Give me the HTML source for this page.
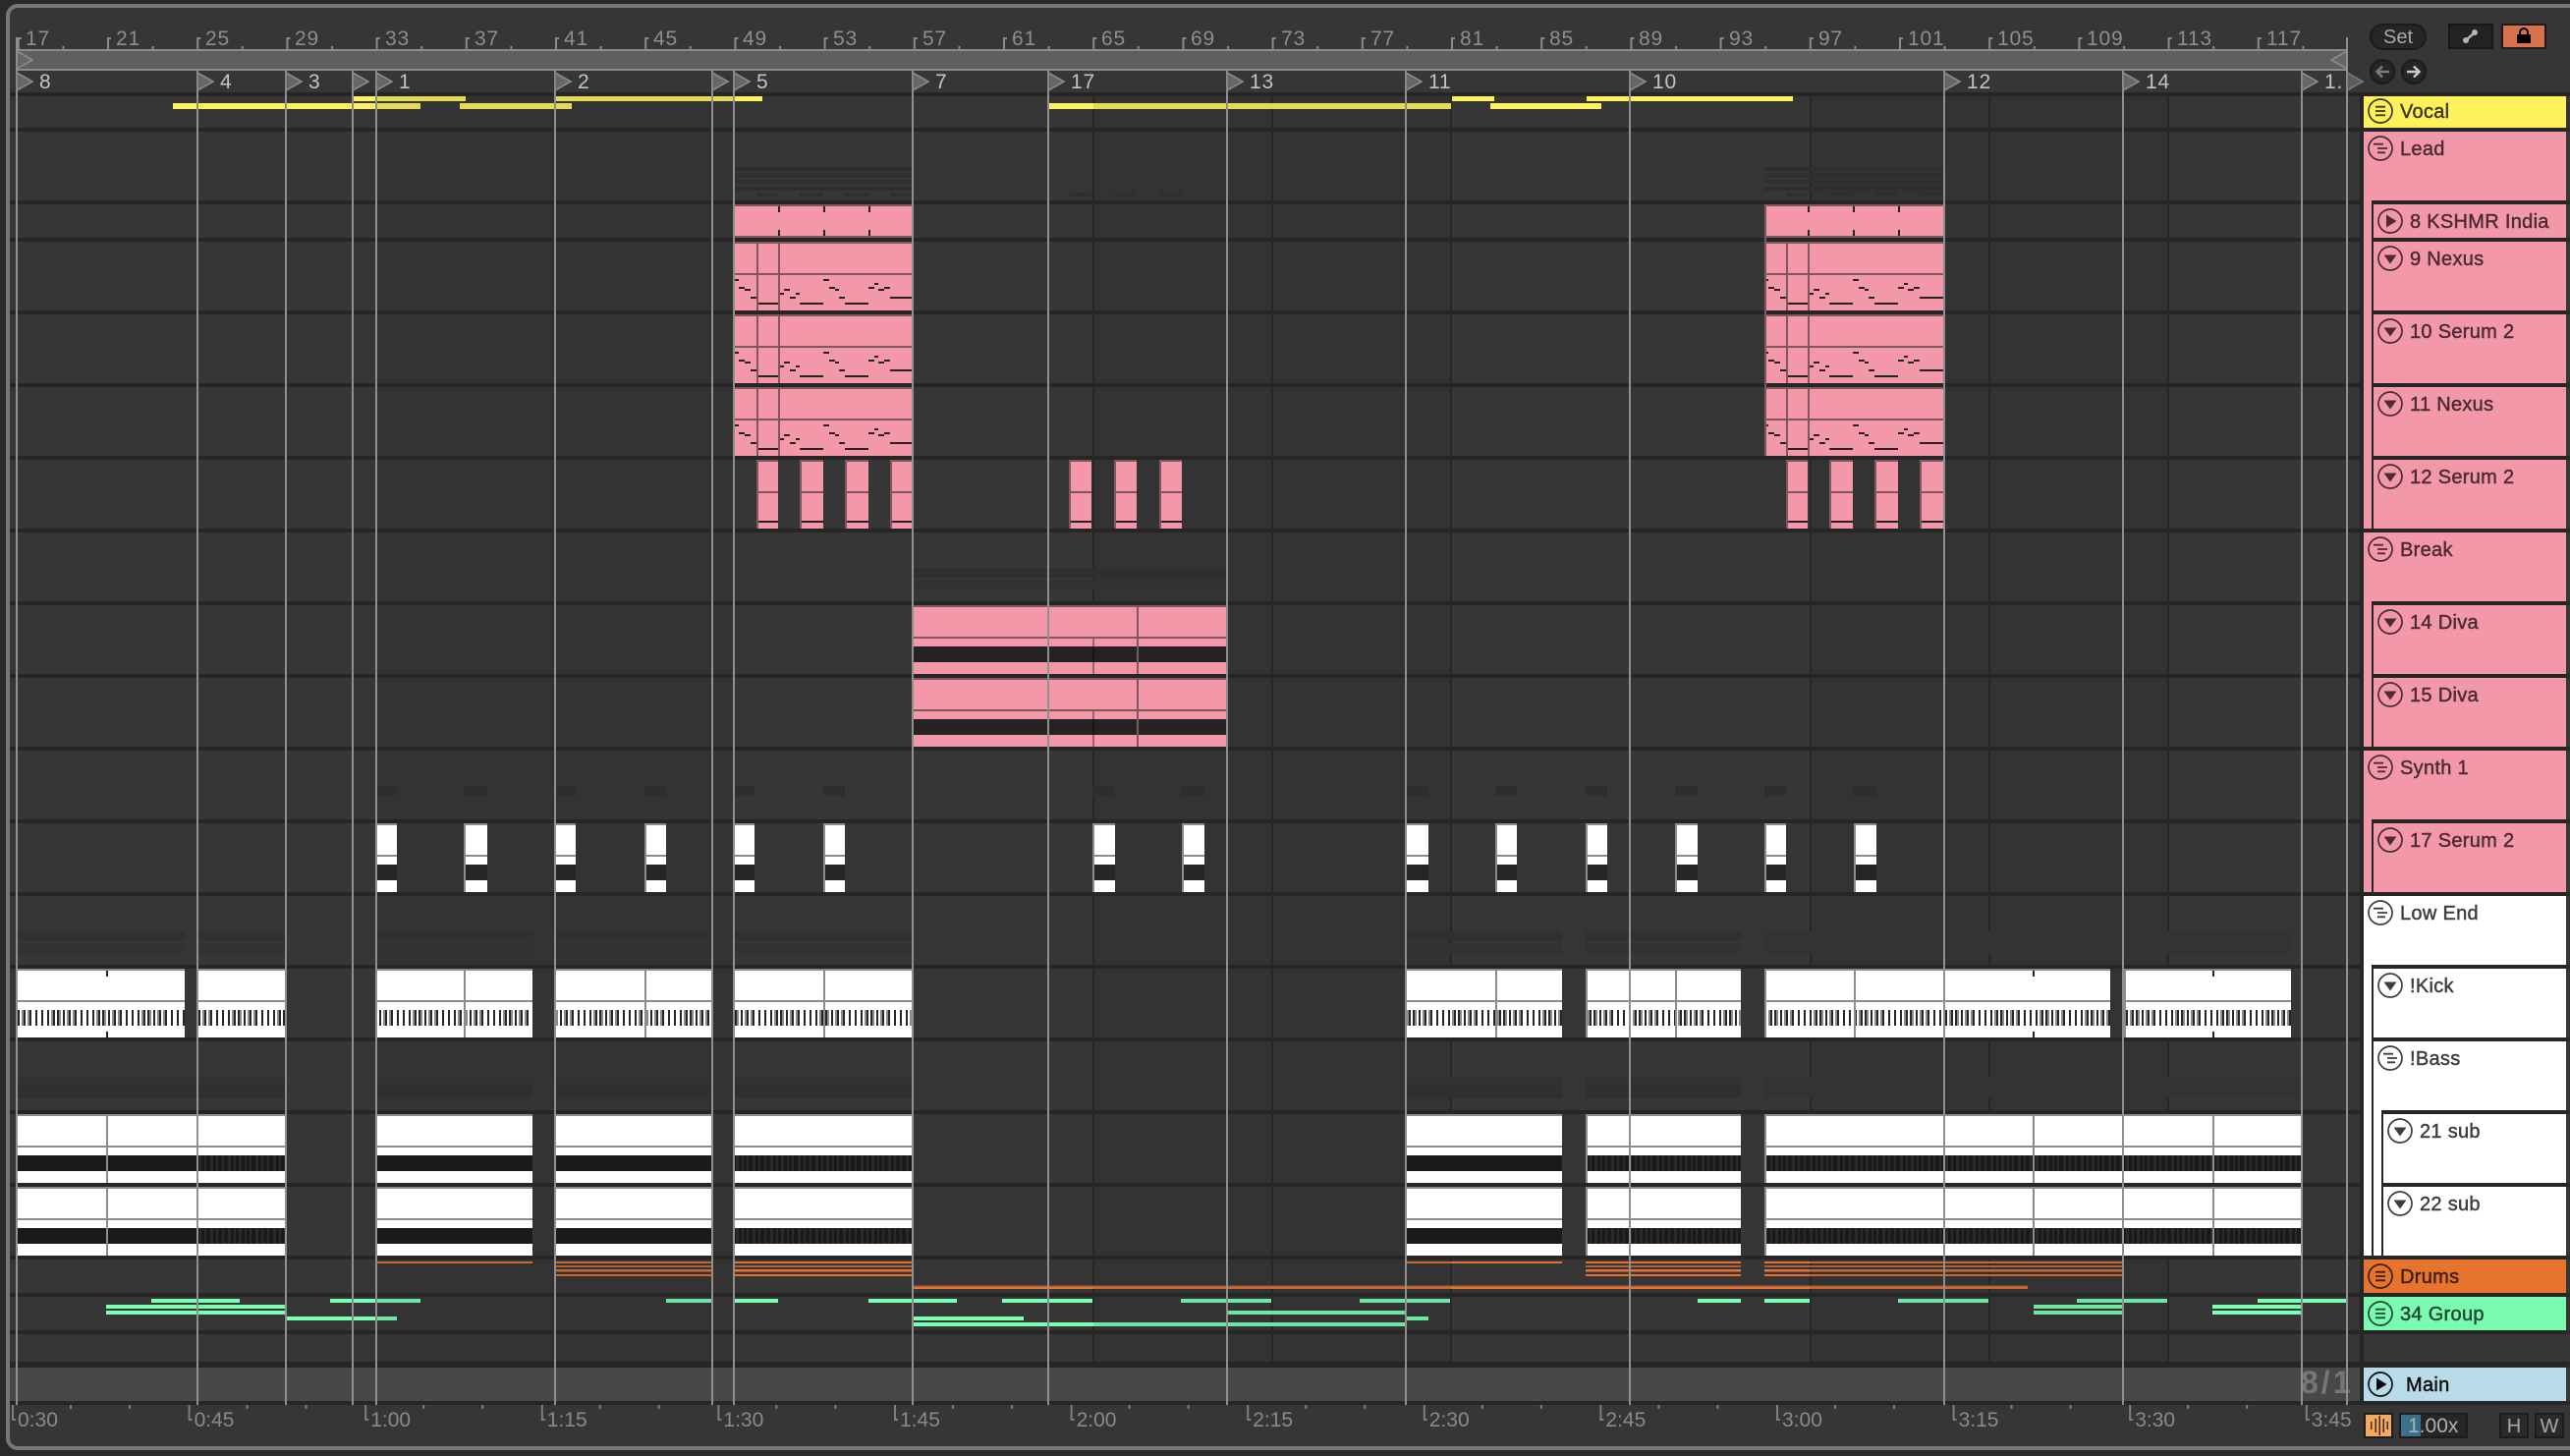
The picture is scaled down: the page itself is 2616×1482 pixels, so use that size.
<!DOCTYPE html>
<html><head><meta charset="utf-8"><title>Arrangement</title>
<style>
html,body{margin:0;padding:0;background:#2a2a2a;width:2616px;height:1482px;overflow:hidden}
svg{display:block}
.r{font:21px "Liberation Sans Narrow","Liberation Sans",sans-serif;fill:#8e8e8e;letter-spacing:.8px}
.l{font:21px "Liberation Sans Narrow","Liberation Sans",sans-serif;fill:#c4c4c4;letter-spacing:.8px}
.b{font:21px "Liberation Sans",sans-serif;fill:#8a8a8a}
.t{font:20px "Liberation Sans",sans-serif;fill:currentColor;stroke:currentColor;stroke-width:.45px;letter-spacing:.3px}
.s{font:20px "Liberation Sans",sans-serif;fill:#a8a8a8;text-anchor:middle}
</style></head><body>
<svg xmlns="http://www.w3.org/2000/svg" width="2616" height="1482" viewBox="0 0 2616 1482">
<defs>
<pattern id="rt" patternUnits="userSpaceOnUse" x="17.8" y="38" width="91.2" height="12">
<rect width="2" height="12" fill="#8a8a8a"/><rect width="4" height="2" fill="#8a8a8a"/><rect x="45.6" y="9" width="2" height="3" fill="#8a8a8a"/></pattern>
<pattern id="bt" patternUnits="userSpaceOnUse" x="12" y="1430" width="179.6" height="18">
<rect width="2" height="15" fill="#7e7e7e"/><rect y="14" width="4" height="2" fill="#7e7e7e"/><rect x="59" width="2" height="4" fill="#7e7e7e"/><rect x="119" width="2" height="4" fill="#7e7e7e"/></pattern>
<pattern id="bc" patternUnits="userSpaceOnUse" x="18" y="0" width="46" height="100">
<rect x="0" width="2" height="100" fill="#262626"/><rect x="4" width="2" height="100" fill="#8c8c8c"/><rect x="6" width="2" height="100" fill="#262626"/><rect x="10" width="2" height="100" fill="#8c8c8c"/><rect x="12" width="2" height="100" fill="#262626"/><rect x="18" width="2" height="100" fill="#262626"/><rect x="24" width="2" height="100" fill="#262626"/><rect x="30" width="2" height="100" fill="#262626"/><rect x="34" width="2" height="100" fill="#8c8c8c"/><rect x="36" width="2" height="100" fill="#262626"/><rect x="40" width="2" height="100" fill="#262626"/><rect x="42" width="2" height="100" fill="#8c8c8c"/></pattern>
<pattern id="tx" patternUnits="userSpaceOnUse" x="18" y="0" width="46" height="100">
<rect x="1" width="2" height="100" fill="#2a2a2a"/><rect x="6" width="2" height="100" fill="#2a2a2a"/><rect x="12" width="3" height="100" fill="#2a2a2a"/><rect x="18" width="2" height="100" fill="#2a2a2a"/><rect x="24" width="2" height="100" fill="#2a2a2a"/><rect x="30" width="3" height="100" fill="#2a2a2a"/><rect x="36" width="2" height="100" fill="#2a2a2a"/><rect x="41" width="3" height="100" fill="#2a2a2a"/></pattern>
<clipPath id="dz"><rect x="384" y="90" width="364" height="1300"/><rect x="1113" y="90" width="364" height="1300"/><rect x="1842" y="90" width="365" height="1300"/></clipPath>

<path id="ks" d="M18 0h170v1h-170zM202 0h88v1h-88zM384 0h158v1h-158zM566 0h158v1h-158zM748 0h182v1h-182zM1432 0h158v1h-158zM1614 0h158v1h-158zM1796 0h352v1h-352zM2162 0h170v1h-170z"/>
<path id="kg" d="M18 0h170v1h-170zM202 0h88v1h-88zM384 0h158v1h-158zM566 0h158v1h-158zM748 0h182v1h-182zM1432 0h158v1h-158zM1614 0h158v1h-158z"/>
<path id="kr" d="M1796 0h352v1h-352zM2162 0h170v1h-170z"/>
<path id="bs" d="M18 0h272v1h-272zM384 0h158v1h-158zM566 0h158v1h-158zM748 0h182v1h-182zM1432 0h158v1h-158zM1614 0h158v1h-158zM1796 0h546v1h-546z"/>
<path id="bg" d="M18 0h272v1h-272zM384 0h158v1h-158zM566 0h158v1h-158zM748 0h182v1h-182zM1432 0h158v1h-158zM1614 0h158v1h-158z"/>
<path id="sg" d="M384 0h20v1h-20zM472 0h24v1h-24zM566 0h20v1h-20zM656 0h22v1h-22zM748 0h20v1h-20zM838 0h22v1h-22zM1112 0h23v1h-23zM1203 0h23v1h-23zM1432 0h22v1h-22zM1522 0h22v1h-22zM1614 0h22v1h-22zM1705 0h23v1h-23zM1796 0h22v1h-22zM1887 0h23v1h-23z"/>
<path id="sw" d="M384 0h20v1h-20zM474 0h22v1h-22zM566 0h20v1h-20zM658 0h20v1h-20zM748 0h20v1h-20zM840 0h20v1h-20zM1114 0h21v1h-21zM1205 0h21v1h-21zM1432 0h22v1h-22zM1524 0h20v1h-20zM1616 0h20v1h-20zM1707 0h21v1h-21zM1798 0h20v1h-20zM1889 0h21v1h-21z"/>

<path id="yl" d="M360 98h114v5h-114zM566 98h210v5h-210zM1478 98h43v5h-43zM1615 98h210v5h-210zM176 105h252v6h-252zM468 105h114v6h-114zM1068 105h409v6h-409zM1517 105h113v6h-113z"/>
<path id="gr" d="M154 1322h90v4h-90zM336 1322h92v4h-92zM678 1322h46v4h-46zM748 1322h44v4h-44zM884 1322h90v4h-90zM1020 1322h92v4h-92zM1202 1322h92v4h-92zM1384 1322h92v4h-92zM1728 1322h44v4h-44zM1796 1322h46v4h-46zM1932 1322h92v4h-92zM2114 1322h92v4h-92zM2298 1322h91v4h-91zM108 1328h182v4h-182zM2070 1328h90v4h-90zM2252 1328h91v4h-91zM108 1334h182v4h-182zM1250 1334h181v4h-181zM2070 1334h90v4h-90zM2252 1334h91v4h-91zM292 1340h112v4h-112zM930 1340h112v4h-112zM1432 1340h22v4h-22zM930 1346h501v4h-501z"/>
<path id="or" d="M384 1284h158v2h-158zM1432 1284h158v2h-158zM566 1284h158v2h-158zM748 1284h180v2h-180zM1614 1284h158v2h-158zM1796 1284h364v2h-364zM566 1292h158v2.500h-158zM748 1292h180v2.500h-180zM1614 1292h158v2.500h-158zM1796 1292h364v2.500h-364zM566 1297h158v2h-158zM748 1297h180v2h-180zM1614 1297h158v2h-158zM1796 1297h364v2h-364zM930 1310h1134v2h-1134z"/>
<path id="or2" d="M566 1288h158v2h-158zM748 1288h180v2h-180zM1614 1288h158v2h-158zM1796 1288h364v2h-364zM930 1308.500h1134v1.500h-1134z"/>

<g id="ih" fill="none" stroke="currentColor"><circle r="12" stroke-width="1.700"/><path d="M-5-4.300H5M-5 0H5M-5 4.300H5" stroke-width="1.800"/></g>
<g id="is" fill="none" stroke="currentColor"><circle r="12" stroke-width="1.700"/><path d="M-7-4.300H3M-3 0H7M-3 4.300H5" stroke-width="1.800"/></g>
<g id="ip"><circle r="12" fill="none" stroke="currentColor" stroke-width="1.700"/><path d="M-4-6.500L6.500 0L-4 6.500z" fill="currentColor"/></g>
<g id="id"><circle r="12" fill="none" stroke="currentColor" stroke-width="1.700"/><path d="M-6.500-3.500H6.500L0 5.500z" fill="currentColor"/></g>
<polygon id="lt" points="0,0 16,9 0,18" fill="#666" stroke="#8a8a8a" stroke-width="1.600"/>

<g id="pr">
<rect x="748" y="246" width="182" height="70" fill="#f298a8"/>
<path d="M748 246h182v2h-182zM748 278h182v2h-182zM770 248h2v68h-2zM792 248h2v68h-2z" fill="#80575f"/>
<path d="M748 284h4v2h-4zM752 292h6v2h-6zM758 294h6v2h-6zM764 302h6v2h-6zM772 308h20v2h-20zM794 298h4v2h-4zM798 294h6v2h-6zM804 302h6v2h-6zM810 298h4v2h-4zM814 308h24v2h-24zM838 284h6v2h-6zM844 292h6v2h-6zM850 294h4v2h-4zM854 302h6v2h-6zM860 308h24v2h-24zM884 292h6v2h-6zM890 288h4v2h-4zM894 294h6v2h-6zM900 292h6v2h-6zM906 302h24v2h-24z" fill="#2a2022"/>
</g>
<g id="pk">
<path d="M748 170h182v4h-182zM748 176h182v5h-182zM748 183h182v4h-182zM748 190h182v4h-182zM770 196h22v4h-22zM814 196h24v4h-24zM860 196h24v4h-24zM906 196h24v4h-24z" fill="#2f2f2f"/>
<rect x="748" y="208" width="182" height="34" fill="#f298a8"/>
<path d="M748 208h182v2h-182zM748 240h182v2h-182z" fill="#80575f"/>
<path d="M792 210h2v6h-2zM838 210h2v6h-2zM884 210h2v6h-2zM792 234h2v6h-2zM838 234h2v6h-2zM884 234h2v6h-2z" fill="#2a2022"/>
<use href="#pr"/><use href="#pr" y="74"/><use href="#pr" y="148"/>
<path d="M770 468h22v70h-22zM814 468h24v70h-24zM860 468h24v70h-24zM906 468h24v70h-24z" fill="#80575f"/>
<path d="M772 470h20v30h-20zM816 470h22v30h-22zM862 470h22v30h-22zM908 470h22v30h-22zM772 502h20v36h-20zM816 502h22v36h-22zM862 502h22v36h-22zM908 502h22v36h-22z" fill="#f298a8"/>
<path d="M772 530h20v2h-20zM816 530h22v2h-22zM862 530h22v2h-22zM908 530h22v2h-22z" fill="#2a2022"/>
</g>
<g id="brk">
<rect x="930" y="616" width="318" height="70" fill="#f298a8"/>
<path d="M930 616h318v2h-318zM930 648h318v2h-318z" fill="#80575f"/>
<rect x="930" y="658" width="318" height="16" fill="#262122"/>
<rect x="1157" y="618" width="2" height="68" fill="#80575f"/>
<rect x="1112" y="650" width="2" height="36" fill="#000" opacity=".35"/>
</g>
<g id="bass">
<use href="#bs" transform="translate(0,1134) scale(1,70)" fill="#8c8c8c"/>
<use href="#bs" transform="translate(0,1136) scale(1,30)" fill="#fff"/>
<use href="#bs" transform="translate(0,1168) scale(1,36)" fill="#fff"/>
<use href="#bs" transform="translate(0,1176) scale(1,16)" fill="#1a1a1a"/>
<path d="M202 1176h88v16h-88zM748 1176h182v16h-182zM1614 1176h158v16h-158zM1796 1176h546v16h-546z" fill="url(#tx)"/>
<path d="M108 1136h2v68h-2zM2069 1136h2v68h-2zM2252 1136h2v68h-2zM1614 1136h2v68h-2zM1796 1136h2v68h-2z" fill="#8c8c8c"/>
</g>
</defs>

<rect width="2616" height="1482" fill="#2a2a2a"/>
<rect x="8" y="6" width="2700" height="1468" rx="10" fill="#363636" stroke="#777" stroke-width="4"/>

<!-- bands -->
<path d="M384 98h364v1288h-364zM1113 98h364v1288h-364zM1842 98h365v1288h-365z" fill="#000" opacity=".05"/>

<!-- ruler -->
<rect x="17" y="38" width="2372" height="12" fill="url(#rt)"/>
<g class="r" transform="translate(-1,0)">
<text x="27" y="46">17</text><text x="119" y="46">21</text><text x="210" y="46">25</text><text x="301" y="46">29</text><text x="393" y="46">33</text><text x="484" y="46">37</text><text x="575" y="46">41</text><text x="666" y="46">45</text><text x="757" y="46">49</text><text x="849" y="46">53</text><text x="940" y="46">57</text><text x="1031" y="46">61</text><text x="1122" y="46">65</text><text x="1213" y="46">69</text><text x="1305" y="46">73</text><text x="1396" y="46">77</text><text x="1487" y="46">81</text><text x="1578" y="46">85</text><text x="1669" y="46">89</text><text x="1761" y="46">93</text><text x="1852" y="46">97</text><text x="1943" y="46">101</text><text x="2034" y="46">105</text><text x="2125" y="46">109</text><text x="2217" y="46">113</text><text x="2308" y="46">117</text>
</g>

<!-- loop brace -->
<rect x="17" y="50" width="2372" height="22" fill="#5f5f5f"/>
<path d="M17 50h2372v2h-2372zM17 70h2372v2h-2372z" fill="#8a8a8a"/>
<polygon points="17,52 33,61 17,70" fill="#666" stroke="#8a8a8a" stroke-width="1.600"/>
<polygon points="2389,52 2373,61 2389,70" fill="#666" stroke="#8a8a8a" stroke-width="1.600"/>

<!-- grid vertical -->
<path d="M1112 98h2v1288h-2zM1294 98h2v1288h-2zM1476 98h2v1288h-2zM1842 98h2v1288h-2zM2024 98h2v1288h-2zM2206 98h2v1288h-2z" fill="#272727"/>

<!-- main row -->
<rect x="10" y="1392" width="2392" height="34" fill="#484848"/>

<!-- dividers -->
<path d="M10 94h2606v4h-2606zM10 130h2606v4h-2606zM10 204h2606v4h-2606zM10 242h2606v4h-2606zM10 316h2606v4h-2606zM10 390h2606v4h-2606zM10 464h2606v4h-2606zM10 538h2606v4h-2606zM10 612h2606v4h-2606zM10 686h2606v4h-2606zM10 760h2606v4h-2606zM10 834h2606v4h-2606zM10 908h2606v4h-2606zM10 982h2606v4h-2606zM10 1056h2606v4h-2606zM10 1130h2606v4h-2606zM10 1204h2606v4h-2606zM10 1278h2606v4h-2606zM10 1316h2606v4h-2606zM10 1354h2606v4h-2606zM10 1386h2606v6h-2606zM10 1426h2606v4h-2606z" fill="#262626"/>

<!-- thin strips -->
<use href="#yl" fill="#fff15c"/><use href="#yl" fill="#e6d953" clip-path="url(#dz)"/>
<use href="#gr" fill="#7bffb1"/><use href="#gr" fill="#6fe69f" clip-path="url(#dz)"/>
<use href="#or2" fill="#a9623a"/>
<use href="#or" fill="#e8722d"/><use href="#or" fill="#c8682f" clip-path="url(#dz)"/>

<!-- ghosts -->
<rect x="930" y="578" width="318" height="10" fill="#2f2f2f"/><rect x="930" y="590" width="318" height="10" fill="#313131"/>
<use href="#sg" transform="translate(0,800) scale(1,10)" fill="#2e2e2e"/>
<use href="#kg" transform="translate(0,948) scale(1,10)" fill="#303030"/>
<use href="#kg" transform="translate(0,960) scale(1,10)" fill="#323232"/>
<use href="#kr" transform="translate(0,948) scale(1,22)" fill="#333"/>
<use href="#bg" transform="translate(0,1096) scale(1,10)" fill="#313131"/>
<use href="#bg" transform="translate(0,1106) scale(1,12)" fill="#2f2f2f"/>
<rect x="1796" y="1096" width="546" height="22" fill="#333"/>

<!-- pink clips -->
<use href="#pk"/>
<g transform="translate(1048,0)"><use href="#pk"/></g>
<path d="M1796 208h2v256h-2z" fill="#80575f"/>
<path d="M1089 196h22v4h-22zM1134 196h22v4h-22zM1181 196h22v4h-22z" fill="#2f2f2f"/>
<path d="M1088 468h23v70h-23zM1134 468h23v70h-23zM1180 468h23v70h-23z" fill="#80575f"/>
<path d="M1090 470h21v30h-21zM1136 470h21v30h-21zM1182 470h21v30h-21zM1090 502h21v36h-21zM1136 502h21v36h-21zM1182 502h21v36h-21z" fill="#f298a8"/>
<path d="M1090 530h21v2h-21zM1136 530h21v2h-21zM1182 530h21v2h-21z" fill="#2a2022"/>
<use href="#brk"/><use href="#brk" y="74"/>

<!-- synth row -->
<use href="#sg" transform="translate(0,838) scale(1,70)" fill="#8c8c8c"/>
<use href="#sw" transform="translate(0,840) scale(1,30)" fill="#fff"/>
<use href="#sw" transform="translate(0,872) scale(1,36)" fill="#fff"/>
<use href="#sw" transform="translate(0,880) scale(1,16)" fill="#262626"/>

<!-- kick -->
<use href="#ks" transform="translate(0,986) scale(1,70)" fill="#8c8c8c"/>
<use href="#ks" transform="translate(0,988) scale(1,30)" fill="#fff"/>
<use href="#ks" transform="translate(0,1020) scale(1,36)" fill="#fff"/>
<use href="#ks" transform="translate(0,1028) scale(1,16)" fill="url(#bc)"/>
<path d="M108 988h2v6h-2zM108 1050h2v6h-2zM2069 988h2v6h-2zM2069 1050h2v6h-2zM2252 988h2v6h-2zM2252 1050h2v6h-2z" fill="#262626"/>
<path d="M472 988h2v68h-2zM656 988h2v68h-2zM838 988h2v68h-2zM1522 988h2v68h-2zM1705 988h2v68h-2zM1887 988h2v68h-2zM1614 988h2v68h-2zM1796 988h2v68h-2zM2162 988h2v68h-2z" fill="#8c8c8c"/>

<!-- bass -->
<use href="#bass"/><use href="#bass" y="74"/>

<!-- 8/1 -->
<text x="2342" y="1418" style="font:bold 32px 'Liberation Sans',sans-serif;letter-spacing:3px;fill:#767676">8/1</text>

<!-- locator lines -->
<path d="M16 38h2v1392h-2zM200 72h2v1358h-2zM290 72h2v1358h-2zM358 72h2v1358h-2zM382 72h2v1358h-2zM564 72h2v1358h-2zM724 72h2v1358h-2zM746 72h2v1358h-2zM928 72h2v1358h-2zM1066 72h2v1358h-2zM1248 72h2v1358h-2zM1430 72h2v1358h-2zM1658 72h2v1358h-2zM1978 72h2v1358h-2zM2160 72h2v1358h-2zM2342 72h2v1358h-2zM2388 38h2v1392h-2z" fill="#8f8f8f"/>
<use href="#lt" x="17" y="74"/><use href="#lt" x="201" y="74"/><use href="#lt" x="291" y="74"/><use href="#lt" x="359" y="74"/><use href="#lt" x="383" y="74"/><use href="#lt" x="565" y="74"/><use href="#lt" x="725" y="74"/><use href="#lt" x="747" y="74"/><use href="#lt" x="929" y="74"/><use href="#lt" x="1067" y="74"/><use href="#lt" x="1249" y="74"/><use href="#lt" x="1431" y="74"/><use href="#lt" x="1659" y="74"/><use href="#lt" x="1979" y="74"/><use href="#lt" x="2161" y="74"/><use href="#lt" x="2343" y="74"/><use href="#lt" x="2389" y="74" opacity=".8"/>
<g class="l">
<text x="40" y="90">8</text><text x="224" y="90">4</text><text x="314" y="90">3</text><text x="406" y="90">1</text><text x="588" y="90">2</text><text x="770" y="90">5</text><text x="952" y="90">7</text><text x="1090" y="90">17</text><text x="1272" y="90">13</text><text x="1454" y="90">11</text><text x="1682" y="90">10</text><text x="2002" y="90">12</text><text x="2184" y="90">14</text><text x="2366" y="90">1.</text>
</g>

<!-- time ruler -->
<rect x="12" y="1430" width="2378" height="18" fill="url(#bt)"/>
<g class="b">
<text x="18" y="1452">0:30</text><text x="197.600" y="1452">0:45</text><text x="377.200" y="1452">1:00</text><text x="556.800" y="1452">1:15</text><text x="736.400" y="1452">1:30</text><text x="916" y="1452">1:45</text><text x="1095.600" y="1452">2:00</text><text x="1275.200" y="1452">2:15</text><text x="1454.800" y="1452">2:30</text><text x="1634.400" y="1452">2:45</text><text x="1814" y="1452">3:00</text><text x="1993.600" y="1452">3:15</text><text x="2173.200" y="1452">3:30</text><text x="2352.800" y="1452">3:45</text>
</g>

<!-- right panel -->
<rect x="2402" y="94" width="210" height="1332" fill="#262626"/>
<rect x="2406" y="1358" width="206" height="28" fill="#363636"/>
<rect x="2612" y="98" width="4" height="1328" fill="#363636"/>
<path d="M2612 130h4v4h-4zM2612 204h4v4h-4zM2612 242h4v4h-4zM2612 316h4v4h-4zM2612 390h4v4h-4zM2612 464h4v4h-4zM2612 538h4v4h-4zM2612 612h4v4h-4zM2612 686h4v4h-4zM2612 760h4v4h-4zM2612 834h4v4h-4zM2612 908h4v4h-4zM2612 982h4v4h-4zM2612 1056h4v4h-4zM2612 1130h4v4h-4zM2612 1204h4v4h-4zM2612 1278h4v4h-4zM2612 1316h4v4h-4zM2612 1354h4v4h-4zM2612 1386h4v6h-4z" fill="#2a2a2a"/>

<rect x="2406" y="98" width="206" height="32" fill="#fff15c"/>
<path d="M2406 134h206v70h-206zM2406 204h8v334h-8zM2416 208h196v34h-196zM2416 246h196v70h-196zM2416 320h196v70h-196zM2416 394h196v70h-196zM2416 468h196v70h-196zM2406 542h206v70h-206zM2406 612h8v148h-8zM2416 616h196v70h-196zM2416 690h196v70h-196zM2406 764h206v70h-206zM2406 834h8v74h-8zM2416 838h196v70h-196z" fill="#f298a8"/>
<path d="M2406 912h206v70h-206zM2406 982h8v296h-8zM2416 986h196v70h-196zM2416 1060h196v70h-196zM2416 1130h8v148h-8zM2426 1134h186v70h-186zM2426 1208h186v70h-186z" fill="#fff"/>
<rect x="2406" y="1282" width="206" height="34" fill="#e6742f"/>
<rect x="2406" y="1320" width="206" height="34" fill="#7bfbb0"/>
<rect x="2406" y="1392" width="206" height="34" fill="#b7dbe8"/>

<g style="color:#3d3a14"><use href="#ih" x="2423" y="113"/><text class="t" x="2443" y="120">Vocal</text></g>
<g style="color:#4c2b34">
<use href="#is" x="2423" y="151"/><text class="t" x="2443" y="158">Lead</text>
<use href="#ip" x="2433" y="225"/><text class="t" x="2453" y="232">8 KSHMR India</text>
<use href="#id" x="2433" y="263"/><text class="t" x="2453" y="270">9 Nexus</text>
<use href="#id" x="2433" y="337"/><text class="t" x="2453" y="344">10 Serum 2</text>
<use href="#id" x="2433" y="411"/><text class="t" x="2453" y="418">11 Nexus</text>
<use href="#id" x="2433" y="485"/><text class="t" x="2453" y="492">12 Serum 2</text>
<use href="#is" x="2423" y="559"/><text class="t" x="2443" y="566">Break</text>
<use href="#id" x="2433" y="633"/><text class="t" x="2453" y="640">14 Diva</text>
<use href="#id" x="2433" y="707"/><text class="t" x="2453" y="714">15 Diva</text>
<use href="#is" x="2423" y="781"/><text class="t" x="2443" y="788">Synth 1</text>
<use href="#id" x="2433" y="855"/><text class="t" x="2453" y="862">17 Serum 2</text>
</g>
<g style="color:#3e3e3e">
<use href="#is" x="2423" y="929"/><text class="t" x="2443" y="936">Low End</text>
<use href="#id" x="2433" y="1003"/><text class="t" x="2453" y="1010">!Kick</text>
<use href="#is" x="2433" y="1077"/><text class="t" x="2453" y="1084">!Bass</text>
<use href="#id" x="2443" y="1151"/><text class="t" x="2463" y="1158">21 sub</text>
<use href="#id" x="2443" y="1225"/><text class="t" x="2463" y="1232">22 sub</text>
</g>
<g style="color:#3f1f0c"><use href="#ih" x="2423" y="1299"/><text class="t" x="2443" y="1306">Drums</text></g>
<g style="color:#1f4a33"><use href="#ih" x="2423" y="1337"/><text class="t" x="2443" y="1344">34 Group</text></g>
<g style="color:#0c0c0c"><use href="#ip" x="2423" y="1409"/><text class="t" x="2449" y="1416">Main</text></g>

<!-- top controls -->
<rect x="2413" y="25" width="56" height="25" rx="12.500" fill="#262626" stroke="#1b1b1b" stroke-width="2"/>
<text class="s" x="2441" y="44">Set</text>
<rect x="2493" y="25" width="44" height="24" fill="#232323" stroke="#171717" stroke-width="2"/>
<path d="M2510 41L2519 33" stroke="#b5b5b5" stroke-width="2.500"/><circle cx="2510" cy="41" r="3" fill="#b5b5b5"/><circle cx="2519" cy="33" r="3" fill="#b5b5b5"/>
<rect x="2547" y="25" width="44" height="24" fill="#d9714e" stroke="#1c1c1c" stroke-width="2"/>
<rect x="2562" y="35" width="14" height="9" fill="#000"/>
<path d="M2565 35v-2a4 4 0 0 1 8 0v2" fill="none" stroke="#000" stroke-width="2"/>
<circle cx="2425" cy="73" r="12" fill="#262626" stroke="#1b1b1b" stroke-width="2"/>
<path d="M2432 73h-12M2425 67.500L2419.500 73L2425 78.500" fill="none" stroke="#7c7c7c" stroke-width="2.500"/>
<circle cx="2457" cy="73" r="12" fill="#262626" stroke="#1b1b1b" stroke-width="2"/>
<path d="M2450 73h12M2457 67.500L2462.500 73L2457 78.500" fill="none" stroke="#c9c9c9" stroke-width="2.500"/>

<!-- bottom controls -->
<rect x="2407" y="1439" width="28" height="24" fill="#f3a95e" stroke="#1c1c1c" stroke-width="2"/>
<path d="M2413 1447h1.500v8h-1.500zM2417.500 1444h1.500v14h-1.500zM2421.500 1441h1.500v20h-1.500zM2425.500 1444h1.500v14h-1.500zM2429.500 1447h1.500v8h-1.500z" fill="#3c2a12"/>
<rect x="2443" y="1439" width="68" height="24" fill="#262626" stroke="#1c1c1c" stroke-width="2"/>
<rect x="2444" y="1440" width="20" height="22" fill="#3a7089"/>
<text x="2451" y="1458" style="font:21px 'Liberation Sans',sans-serif;fill:#b0b0b0">1.00x</text>
<rect x="2545" y="1439" width="28" height="24" fill="#2a2a2a" stroke="#1c1c1c" stroke-width="2"/>
<text class="s" x="2559" y="1458">H</text>
<rect x="2581" y="1439" width="28" height="24" fill="#2a2a2a" stroke="#1c1c1c" stroke-width="2"/>
<text class="s" x="2595" y="1458">W</text>
</svg>
</body></html>
